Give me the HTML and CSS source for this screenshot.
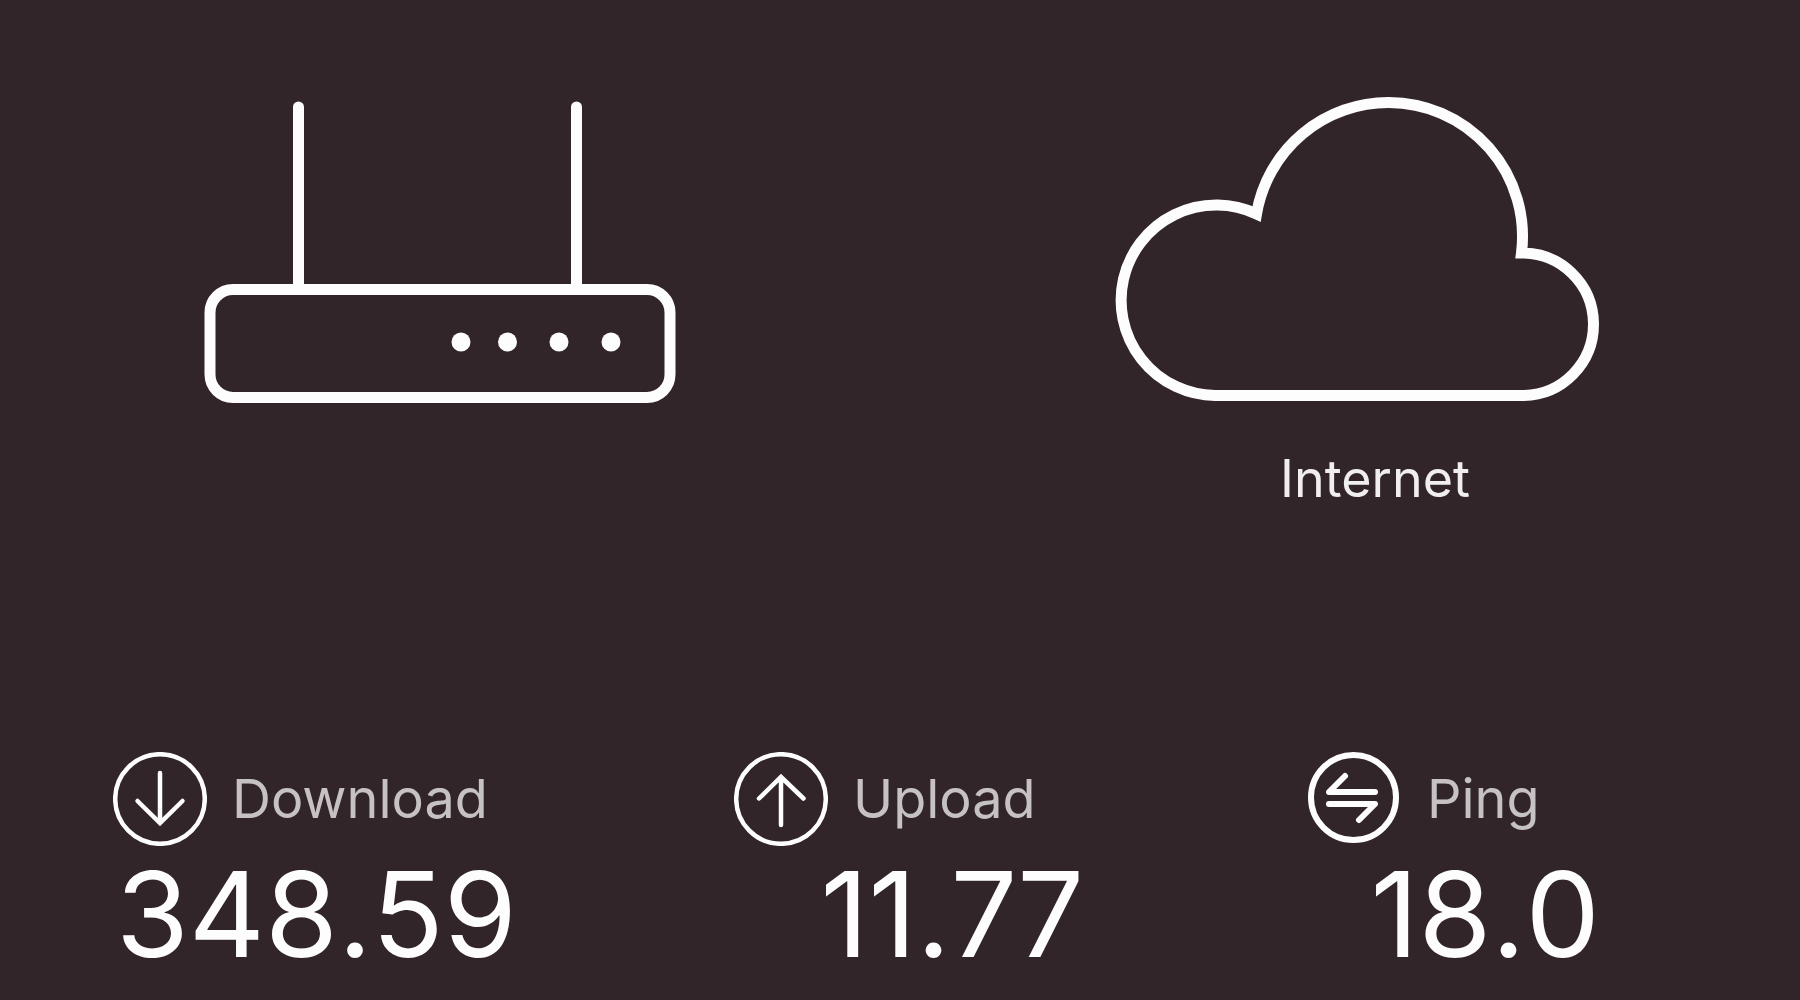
FILE: index.html
```
<!DOCTYPE html>
<html lang="en">
<head>
    <meta charset="UTF-8">
    <meta name="viewport" content="width=device-width, initial-scale=1.0">
    <title>Speed Test</title>
    <link rel="stylesheet" href="styles.css">
</head>
<body>
    <main class="speedtest">
        <section class="network">
            <div class="device">
                <svg class="router" viewBox="0 0 472 308" role="img" aria-label="Router">
                    <path d="M94.5 191V11M372.5 191V11" />
                    <rect x="6" y="193.5" width="460" height="108" rx="23" />
                    <g class="leds">
                        <circle cx="257" cy="246" r="9.5" />
                        <circle cx="303.5" cy="246" r="9.5" />
                        <circle cx="355" cy="246" r="9.5" />
                        <circle cx="407" cy="246" r="9.5" />
                    </g>
                </svg>
            </div>
            <figure class="device">
                <svg class="cloud" viewBox="0 0 486 308" aria-hidden="true">
                    <path d="M101 299.5A95.2 95.2 0 1 1 142.5 118A134 134 0 0 1 275 6.5A134 134 0 0 1 407.5 157A71.2 71.2 0 0 1 409 299.5Z" />
                </svg>
                <figcaption>Internet</figcaption>
            </figure>
        </section>

        <section class="results">
            <div class="result download">
                <h2>
                    <svg class="icon" viewBox="0 0 94 94" aria-hidden="true">
                        <circle cx="47" cy="47" r="44.8" />
                        <path d="M47 21V71M24.5 49L47 71L69.5 49" />
                    </svg>
                    Download
                </h2>
                <p>348.59</p>
            </div>
            <div class="result upload">
                <h2>
                    <svg class="icon" viewBox="0 0 94 94" aria-hidden="true">
                        <circle cx="47" cy="47" r="44.8" />
                        <path d="M47 73V25M25 46.5L47 25L69.5 46.5" />
                    </svg>
                    Upload
                </h2>
                <p>11.77</p>
            </div>
            <div class="result ping">
                <h2>
                    <svg class="icon" viewBox="0 0 94 94" aria-hidden="true">
                        <circle cx="45.5" cy="45.5" r="42.5" />
                        <path d="M67 40H21L37 24M21 52H67L51 68" />
                    </svg>
                    Ping
                </h2>
                <p>18.0</p>
            </div>
        </section>
    </main>
</body>
</html>
```

FILE: styles.css
```
* {
    box-sizing: border-box;
}

body {
    margin: 0;
    background-color: #31252a;
    color: #fdfdfd;
    font-family: Inter, "Liberation Sans", sans-serif;
}

h2,
p,
figure {
    margin: 0;
}

svg {
    display: block;
    fill: none;
    stroke: #fdfdfd;
}

.speedtest {
    display: flex;
    flex-direction: column;
    justify-content: space-between;
    min-height: 100vh;
    padding: 96px 0 36px;
}

/* router and cloud */
.network {
    display: flex;
    justify-content: space-between;
    padding: 0 200px 0 204px;
}

.router {
    width: 472px;
    stroke-width: 11;
    stroke-linecap: round;
}

.leds {
    fill: #fdfdfd;
    stroke: none;
}

.cloud {
    width: 486px;
    stroke-width: 11;
}

figcaption {
    margin-top: 45px;
    padding-left: 36px;
    font-size: 52px;
    line-height: 60px;
    text-align: center;
    color: #f0eeef;
}

/* measured values */
.results {
    display: grid;
    grid-template-columns: 621fr 574fr 292fr;
    padding: 0 200px 0 113px;
}

.download {
    width: 404px;
}

.upload {
    width: 350px;
}

.result h2 {
    display: flex;
    align-items: center;
    gap: 25px;
    font-size: 54px;
    font-weight: 400;
    line-height: 60px;
    color: #c6c1c3;
}

.result p {
    margin-top: 18px;
    font-size: 118px;
    line-height: 100px;
    text-align: right;
    font-kerning: none;
}

.icon {
    flex: none;
    width: 94px;
    height: 94px;
    stroke-width: 4.5;
    stroke-linecap: round;
}

.ping .icon {
    stroke-width: 6;
    stroke-linejoin: round;
}
```
